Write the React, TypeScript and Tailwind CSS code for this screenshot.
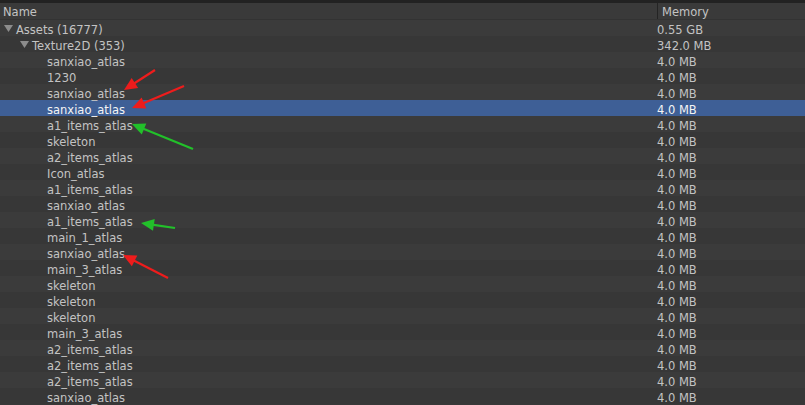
import React from "react";

type Row = { name: string; mem: string; level: number; expanded?: boolean; selected?: boolean };

const children = [
  "sanxiao_atlas",
  "1230",
  "sanxiao_atlas",
  "sanxiao_atlas",
  "a1_items_atlas",
  "skeleton",
  "a2_items_atlas",
  "Icon_atlas",
  "a1_items_atlas",
  "sanxiao_atlas",
  "a1_items_atlas",
  "main_1_atlas",
  "sanxiao_atlas",
  "main_3_atlas",
  "skeleton",
  "skeleton",
  "skeleton",
  "main_3_atlas",
  "a2_items_atlas",
  "a2_items_atlas",
  "a2_items_atlas",
  "sanxiao_atlas",
];

const rows: Row[] = [
  { name: "Assets (16777)", mem: "0.55 GB", level: 0, expanded: true },
  { name: "Texture2D (353)", mem: "342.0 MB", level: 1, expanded: true },
  ...children.map((name, i) => ({ name, mem: "4.0 MB", level: 2, selected: i === 3 })),
];

const arrows = [
  { from: [155, 70], to: [124, 90], color: "#ee1c1c" },
  { from: [184, 86], to: [132, 108], color: "#ee1c1c" },
  { from: [193, 149], to: [132, 124], color: "#22c02a" },
  { from: [175, 228], to: [141, 223], color: "#22c02a" },
  { from: [168, 278], to: [123, 255], color: "#ee1c1c" },
];

function Arrow({ from, to, color }: { from: number[]; to: number[]; color: string }) {
  const dx = to[0] - from[0];
  const dy = to[1] - from[1];
  const len = Math.hypot(dx, dy);
  const ux = dx / len;
  const uy = dy / len;
  const headLen = 13;
  const half = 6;
  const bx = to[0] - ux * headLen;
  const by = to[1] - uy * headLen;
  const pts = [
    `${to[0]},${to[1]}`,
    `${bx - uy * half},${by + ux * half}`,
    `${bx + uy * half},${by - ux * half}`,
  ].join(" ");
  return (
    <g>
      <line x1={from[0]} y1={from[1]} x2={bx + ux * 2} y2={by + uy * 2} stroke={color} strokeWidth={2.2} />
      <polygon points={pts} fill={color} />
    </g>
  );
}

function Triangle() {
  return (
    <svg width="9" height="7" viewBox="0 0 9 7" className="shrink-0">
      <polygon points="0,0 9,0 4.5,7" fill="#8c8c8c" />
    </svg>
  );
}

export default function App() {
  return (
    <div className="relative w-[805px] h-[405px] overflow-hidden bg-[#383838] text-[11.5px] text-[#c3c3c3] font-['DejaVu_Sans',sans-serif] leading-none">
      <div className="h-[3px] bg-[#222222]" />
      <div className="flex h-[17px] bg-[#3a3a3a] border-b border-[#333333]">
        <div className="w-[657px] pl-[3px] pt-[4px]">Name</div>
        <div className="flex-1 border-l border-[#242424] pl-[4px] pt-[4px]">Memory</div>
      </div>
      {rows.map((r, i) => (
        <div
          key={i}
          className={`flex h-[16px] items-start pt-[5px] ${
            r.selected ? "bg-[#3e5f96] text-[#f4f4f4]" : i % 2 === 0 ? "bg-[#3b3b3b]" : "bg-[#373737]"
          }`}
        >
          <div className="w-[657px] flex items-start">
            {r.level === 0 && (
              <div className="flex items-start pl-[4px] gap-[3px]">
                <Triangle />
                <span>{r.name}</span>
              </div>
            )}
            {r.level === 1 && (
              <div className="flex items-start pl-[20px] gap-[3px]">
                <Triangle />
                <span>{r.name}</span>
              </div>
            )}
            {r.level === 2 && <span className="pl-[47px]">{r.name}</span>}
          </div>
          <div className="flex-1">{r.mem}</div>
        </div>
      ))}
      <svg className="absolute inset-0 pointer-events-none" width="805" height="405">
        {arrows.map((a, i) => (
          <Arrow key={i} from={a.from} to={a.to} color={a.color} />
        ))}
      </svg>
    </div>
  );
}
